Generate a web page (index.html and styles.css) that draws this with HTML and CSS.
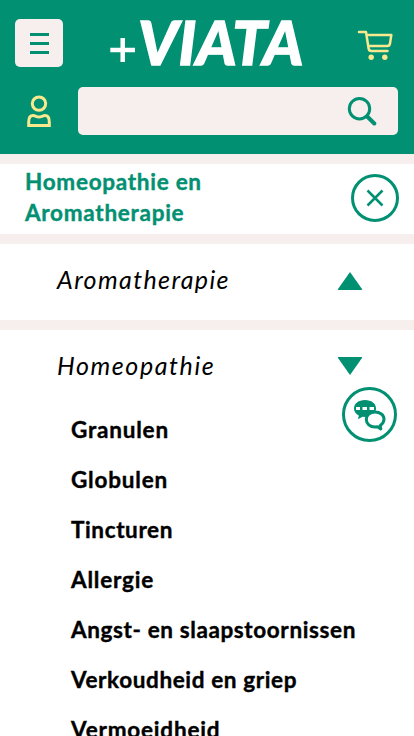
FILE: index.html
```html
<!DOCTYPE html>
<html lang="nl">
<head>
<meta charset="utf-8">
<meta name="viewport" content="width=device-width, initial-scale=1">
<title>Viata</title>
<link rel="stylesheet" href="styles.css">
</head>
<body>
<header class="header">
  <div class="top">
    <button class="menu" aria-label="Menu"><span></span><span></span><span></span></button>
    <svg class="logo" width="196" height="50" viewBox="108 17 196 50">
      <path class="plus" d="M110.300 50H135M122.700 38V62"/>
      <text x="138" y="64.500" textLength="165.500" lengthAdjust="spacingAndGlyphs">VIATA</text>
    </svg>
    <svg class="cart" width="36" height="32" viewBox="357 29 36 32">
      <path d="M359 32H366L368.600 48.500Q369 51 371.300 51H387.500M366.600 35H391.300L390 43.500Q389.600 46 387.300 46H368.300"/>
      <circle cx="371.200" cy="57.300" r="2.700"/><circle cx="384.800" cy="57.300" r="2.700"/>
    </svg>
  </div>
  <div class="bottom">
    <svg class="user" width="26" height="34" viewBox="26 94 26 34">
      <circle cx="39" cy="103.600" r="6.700"/>
      <path d="M28.700 125.500V122C28.700 118 30.400 115.600 33 115.600C35.500 115.600 36.500 117 39 117C41.500 117 42.500 115.600 45 115.600C47.700 115.600 49.300 118 49.300 122V125.500Z"/>
    </svg>
    <div class="search">
      <svg width="30" height="31" viewBox="347 96 30 31">
        <circle cx="359.500" cy="108.700" r="10.200"/><path class="handle" d="M367.200 116.500L374.300 123.500"/>
      </svg>
    </div>
  </div>
</header>
<main>
  <section class="title">
    <h1>Homeopathie en<br>Aromatherapie</h1>
    <button class="close" aria-label="Sluiten"><svg width="18" height="18" viewBox="0 0 18 18"><path d="M1.500 1.500L16.500 16.500M16.500 1.500L1.500 16.500"/></svg></button>
  </section>
  <section class="row"><h2>Aromatherapie</h2><svg class="tri" width="24" height="18" viewBox="0 0 24 18"><path d="M12 0L24 17V18H0V17Z"/></svg></section>
  <section class="row"><h2 class="wide">Homeopathie</h2><svg class="tri" width="24" height="18" viewBox="0 0 24 18"><path d="M0 0H24V1L12 18L0 1Z"/></svg></section>
  <ul>
    <li>Granulen</li><li>Globulen</li><li class="snug">Tincturen</li><li>Allergie</li><li class="snug">Angst- en slaapstoornissen</li><li class="snug">Verkoudheid en griep</li><li>Vermoeidheid</li>
  </ul>
</main>
<button class="chat" aria-label="Chat">
  <svg width="32" height="32" viewBox="354 399 32 32">
    <path class="solid" d="M365 400C371.500 400 376 403.500 376 408.500C376 414 371.500 417 366 417L362.500 416.800L358 419.200L358.800 415.600C355.800 414 354 411.500 354 408.500C354 403.500 358.500 400 365 400Z"/>
    <path class="dots" d="M356 407H360V410H356ZM362.500 407H367V410H362.500ZM369.500 407H374V410H369.500Z"/>
    <path class="bubble" d="M375 412C370 412 366.300 415 366.300 419.300C366.300 423.800 370 427 375 427L377.500 426.700L380.800 429L380.300 425.500C382.500 424 384 422 384 419.300C384 415 380 412 375 412Z"/>
  </svg>
</button>
</body>
</html>
```
FILE: styles.css
```css
* { box-sizing: border-box; }
body { margin: 0; height: 736px; overflow: hidden; background: #fff; color: #000; font-family: Lato, sans-serif; }
button { padding: 0; border: 0; }
svg { display: block; flex: none; }
.header { height: 154px; background: #029072; padding: 17px 16px 0 15px; }
.top { display: flex; height: 50px; }
.menu { width: 48px; height: 48px; margin-top: 2px; border-radius: 5px; background: #f7eeee; display: flex; flex-direction: column; align-items: center; justify-content: center; gap: 6px; }
.menu span { width: 19px; height: 3px; background: #029072; }
.logo { margin-left: 45px; fill: #fff; font: italic 900 61px Lato, sans-serif; overflow: visible; }
.logo text { stroke: #fff; stroke-width: 1.300; }
.plus { stroke: #fff; stroke-width: 4.500; }
.cart { margin: 12px 0 0 53px; fill: none; stroke: #f8e98e; stroke-width: 2.500; stroke-linejoin: round; stroke-linecap: round; }
.cart circle { fill: #f8e98e; stroke: none; }
.bottom { display: flex; margin-top: 20px; }
.user { margin: 7px 26px 0 11px; fill: none; stroke: #f8e98e; stroke-width: 3; }
.search { flex: 1; height: 48px; border-radius: 5px; background: #f7eeee; display: flex; justify-content: flex-end; padding: 9px 21px 0 0; }
.search svg { fill: none; stroke: #029072; stroke-width: 3; stroke-linecap: round; }
.search .handle { stroke-width: 4; }
.title { border-top: 10px solid #f7eeee; height: 80px; padding: 2px 15px 0 25px; display: flex; justify-content: space-between; color: #029072; }
h1 { margin: 0; font-size: 22.500px; line-height: 31px; font-weight: 700; letter-spacing: .72px; -webkit-text-stroke: .4px currentColor; }
.close { width: 48px; height: 48px; margin-top: 8px; border: 3px solid #029072; border-radius: 50%; background: #fff; display: flex; align-items: center; justify-content: center; }
.close path { stroke: #029072; stroke-width: 2.500; }
.row { height: 86px; border-top: 10px solid #f7eeee; padding: 0 52.500px 0 57px; display: flex; justify-content: space-between; align-items: flex-start; }
h2 { margin: 19px 0 0; font-size: 25px; line-height: 32px; font-weight: 400; font-style: italic; letter-spacing: 1.380px; }
h2.wide { letter-spacing: 1.600px; }
.tri { margin-top: 28px; fill: #029072; }
.row + .row .tri { margin-top: 27px; }
ul { list-style: none; margin: 8px 0 0; padding: 0 0 0 71px; }
li { height: 50px; line-height: 31px; font-size: 22.500px; font-weight: 700; white-space: nowrap; letter-spacing: .8px; -webkit-text-stroke: .4px currentColor; }
li.snug { letter-spacing: .62px; }
.chat { position: absolute; left: 342px; top: 387px; width: 55px; height: 55px; border: 3px solid #029072; border-radius: 50%; background: #fff; display: flex; align-items: center; justify-content: center; }
.solid { fill: #029072; }
.dots { fill: #fff; }
.bubble { fill: #fff; stroke: #029072; stroke-width: 3; stroke-linejoin: round; }
```
